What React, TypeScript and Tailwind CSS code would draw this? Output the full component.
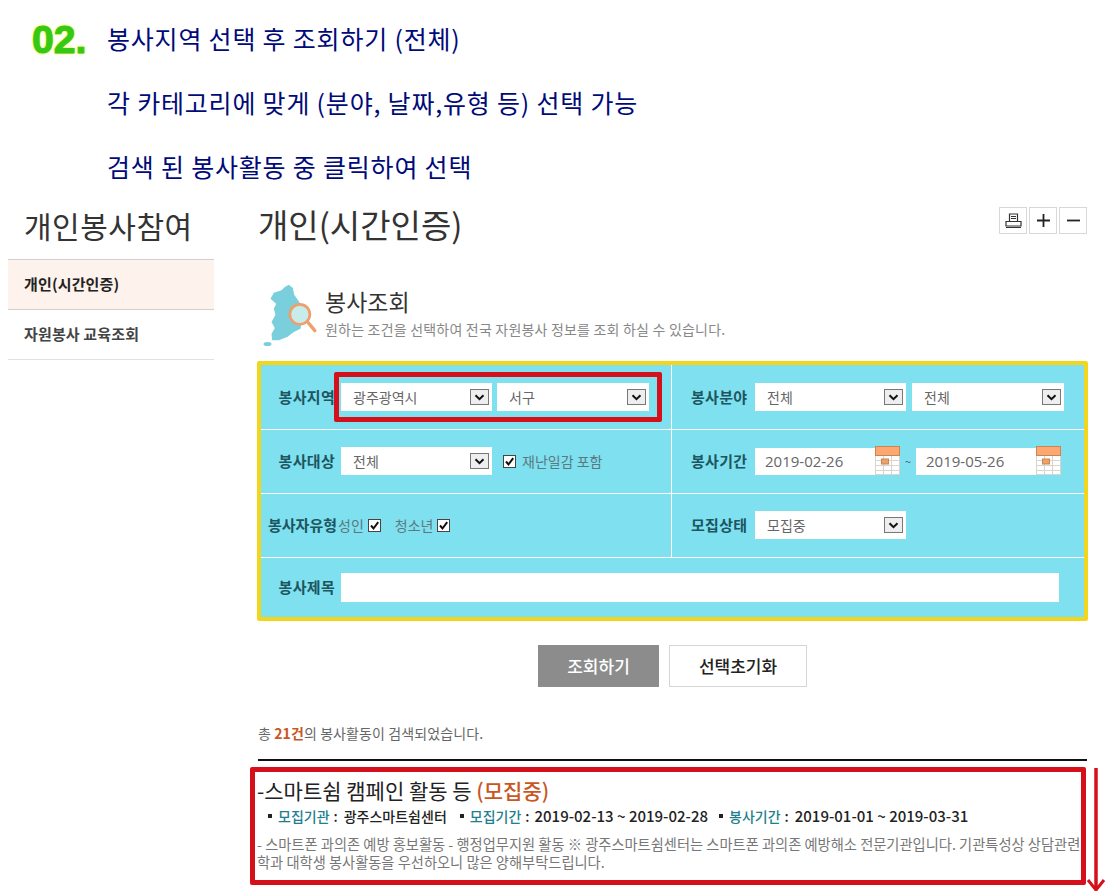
import React from "react";

const Chevron = () => (
  <span className="flex h-[16px] w-[19px] items-center justify-center border border-[#777] bg-[#eeeeee]">
    <svg width="11" height="7" viewBox="0 0 11 7"><path d="M1.5 1.2 L5.5 5.2 L9.5 1.2" fill="none" stroke="#111" strokeWidth="2" /></svg>
  </span>
);

const Select = ({ value, w }: { value: string; w: string }) => (
  <div className={`flex h-[28px] items-center justify-between bg-white pl-[12px] pr-[3px] text-[14px] text-[#666] ${w}`}>
    <span>{value}</span>
    <Chevron />
  </div>
);

const Check = () => (
  <span className="flex h-[13px] w-[13px] shrink-0 items-center justify-center border border-[#444] bg-white">
    <svg width="11" height="11" viewBox="0 0 11 11"><path d="M2 5.5 L4.5 8.5 L9.2 2.2" fill="none" stroke="#111" strokeWidth="2" /></svg>
  </span>
);

const Calendar = () => (
  <svg width="25" height="29" viewBox="0 0 25 29" className="-mt-[2px] shrink-0">
    <rect x="0" y="9" width="25" height="20" fill="#fff" />
    <path d="M0.5 9V29M8.5 9V29M16.5 9V29M24.5 9V29M0 14.5H25M0 19.5H25M0 24.5H25M0 28.5H25" stroke="#d9d5cc" strokeWidth="1" />
    <rect x="0.5" y="0.5" width="24" height="9" fill="#fda870" stroke="#c98552" />
    <rect x="6.5" y="13" width="7" height="5" fill="#f0a264" stroke="#c98552" />
  </svg>
);

const DateBox = ({ value }: { value: string }) => (
  <div className="flex h-[27px] w-[145px] items-center justify-between bg-white pl-[10px] text-[15px] text-[#666]">
    <span className="font-['Open_Sans',sans-serif]">{value}</span>
    <Calendar />
  </div>
);

const Label = ({ children }: { children: React.ReactNode }) => (
  <span className="w-[74px] shrink-0 text-right text-[15px] font-bold tracking-[0.3px] whitespace-nowrap text-[#1d5560]">{children}</span>
);

const RightLabel = ({ children }: { children: React.ReactNode }) => (
  <span className="w-[58px] shrink-0 text-left text-[15px] font-bold tracking-[0.3px] whitespace-nowrap text-[#1d5560]">{children}</span>
);

const ToolBtn = ({ children }: { children: React.ReactNode }) => (
  <span className="flex h-[27px] w-[28px] items-center justify-center border border-[#d8d8d8] bg-white">{children}</span>
);

const Intro = ({ children }: { children: React.ReactNode }) => (
  <p className="flex h-[64px] items-center pl-[107px] text-[25px] tracking-[0.8px] text-[#000a78]">{children}</p>
);

const Bullet = ({ first }: { first?: boolean }) => (
  <span className={`h-[4px] w-[4px] bg-[#222] ${first ? "" : "ml-[11px]"}`} />
);

const Key = ({ children }: { children: React.ReactNode }) => (
  <span className="ml-[6px] text-[#1f7f8e]">{children}</span>
);

const Colon = () => <span className="mx-[4px]">:</span>;

export default function App() {
  return (
    <div className="relative h-[891px] w-[1111px] overflow-hidden bg-white font-['Noto_Sans_CJK_KR','Noto_Sans',sans-serif]">
      <header className="relative pt-[7px]">
        <span className="absolute top-[11px] left-[32px] font-['Liberation_Sans',sans-serif] text-[39px] font-bold text-[#35c916] [-webkit-text-stroke:1px_#35c916] [text-shadow:0_0_3px_#eef23a,0_0_2px_#eef23a,0_0_2px_#eef23a,0_0_1px_#eef23a]">
          02.
        </span>
        <Intro>봉사지역 선택 후 조회하기 (전체)</Intro>
        <Intro>각 카테고리에 맞게 (분야, 날짜,유형 등) 선택 가능</Intro>
        <Intro>검색 된 봉사활동 중 클릭하여 선택</Intro>
      </header>

      <div className="flex">
        <aside className="ml-[8px] w-[206px] shrink-0">
          <h2 className="flex h-[52px] items-center pl-[16px] text-[30px] tracking-[0.5px] whitespace-nowrap text-[#333]">개인봉사참여</h2>
          <ul className="mt-[8px] text-[15px] font-bold tracking-[0.15px]">
            <li className="flex h-[51px] items-center border-y border-[#d5d0cc] bg-[#fdf3ec] pl-[16px] text-[#222]">개인(시간인증)</li>
            <li className="flex h-[50px] items-center border-b border-[#e2e2e2] pl-[16px] text-[#444]">자원봉사 교육조회</li>
          </ul>
        </aside>

        <main className="ml-[43px] w-[831px] shrink-0">
          <div className="flex h-[52px] items-center justify-between">
            <h1 className="pl-[1px] text-[33px] text-[#333]">개인(시간인증)</h1>
            <div className="-mt-[9px] mr-[1px] flex gap-[2px]">
              <ToolBtn>
                <svg width="17" height="16" viewBox="0 0 17 16"><path d="M4.5 8V1H12.5V8M6 3.5H11M6 5.5H11M1 8.5H16V13H1ZM1 14.5H16" fill="none" stroke="#333" strokeWidth="1.2" /></svg>
              </ToolBtn>
              <ToolBtn>
                <svg width="15" height="15" viewBox="0 0 15 15"><path d="M7.5 1V14M1 7.5H14" stroke="#222" strokeWidth="1.8" /></svg>
              </ToolBtn>
              <ToolBtn>
                <svg width="15" height="15" viewBox="0 0 15 15"><path d="M1 7.5H14" stroke="#222" strokeWidth="1.8" /></svg>
              </ToolBtn>
            </div>
          </div>

          <section className="mt-[32px] flex h-[64px]">
            <svg width="57" height="65" viewBox="20 20 170 195" className="-mt-[1px] ml-[5px] shrink-0">
              <path d="M100 28 L112 38 L116 58 L130 78 L138 92 L140 130 L135 160 L115 170 L95 185 L70 195 L50 195 L48 175 L58 158 L48 140 L60 118 L55 100 L62 85 L45 70 L55 52 L78 45 L88 35 Z" fill="#79cfdc" />
              <ellipse cx="36" cy="206" rx="12" ry="6" fill="#79cfdc" />
              <path d="M158 142 L180 168" stroke="#fff" strokeWidth="15" strokeLinecap="round" />
              <circle cx="133" cy="117" r="30" fill="#c7ecea" stroke="#ee9f6e" strokeWidth="8" />
              <path d="M158 142 L178 166" stroke="#ee9f6e" strokeWidth="10" strokeLinecap="round" />
            </svg>
            <div className="ml-[6px]">
              <h3 className="text-[23px] leading-[36px] text-[#333]">봉사조회</h3>
              <p className="text-[14px] leading-[20px] tracking-[0.2px] whitespace-nowrap text-[#888]">원하는 조건을 선택하여 전국 자원봉사 정보를 조회 하실 수 있습니다.</p>
            </div>
          </section>

          <section className="mt-[14px] h-[260px] rounded-[2px] border-[4px] border-[#f2d61e] bg-[#7fe0ef]">
            <div className="grid h-full grid-cols-[411px_1fr] grid-rows-[65px_64px_64px_1fr]">
              <div className="relative flex items-center gap-[5px] border-r border-b border-white">
                <div className="flex items-center gap-[6px]">
                  <Label>봉사지역</Label>
                  <Select value="광주광역시" w="w-[151px]" />
                </div>
                <Select value="서구" w="w-[152px]" />
                <div className="absolute top-[7px] left-[73px] h-[50px] w-[328px] rounded-[2px] border-[5px] border-[#d5101a]" />
              </div>
              <div className="flex items-center gap-[6px] border-b border-white pl-[19px]">
                <RightLabel>봉사분야</RightLabel>
                <Select value="전체" w="w-[151px]" />
                <Select value="전체" w="w-[152px]" />
              </div>

              <div className="flex items-center gap-[6px] border-r border-b border-white pb-[1px]">
                <Label>봉사대상</Label>
                <Select value="전체" w="w-[151px]" />
                <span className="ml-[5px]"><Check /></span>
                <span className="text-[14px] text-[#5a7a80]">재난일감 포함</span>
              </div>
              <div className="flex items-center gap-[6px] border-b border-white pl-[19px]">
                <RightLabel>봉사기간</RightLabel>
                <DateBox value="2019-02-26" />
                <span className="-mx-[1px] w-[6px] text-[11px] text-[#557]">~</span>
                <DateBox value="2019-05-26" />
              </div>

              <div className="flex items-center border-r border-b border-white pl-[7px]">
                <span className="text-[15px] font-bold text-[#1d5560]">봉사자유형</span>
                <span className="ml-[1px] text-[14px] text-[#5a7a80]">성인</span>
                <span className="ml-[4px]"><Check /></span>
                <span className="ml-[14px] text-[14px] text-[#5a7a80]">청소년</span>
                <span className="ml-[4px]"><Check /></span>
              </div>
              <div className="flex items-center gap-[6px] border-b border-white pb-[1px] pl-[19px]">
                <RightLabel>모집상태</RightLabel>
                <Select value="모집중" w="w-[151px]" />
              </div>

              <div className="col-span-2 flex items-center gap-[6px]">
                <Label>봉사제목</Label>
                <div className="h-[29px] w-[718px] bg-white" />
              </div>
            </div>
          </section>

          <div className="mt-[24px] flex justify-center gap-[10px]">
            <button className="h-[42px] w-[121px] bg-[#8c8c8c] text-[17px] font-medium text-white">조회하기</button>
            <button className="h-[42px] w-[138px] border border-[#d5d5d5] bg-white text-[17px] font-medium text-[#222]">선택초기화</button>
          </div>

          <p className="mt-[37px] pl-[1px] text-[14px] leading-[18px] tracking-[0.1px] text-[#666]">
            총 <b className="text-[#c8571f]">21건</b>의 봉사활동이 검색되었습니다.
          </p>

          <div className="mt-[17px] ml-[1px] h-[2px] w-[829px] bg-[#111]" />

          <article className="relative -ml-[7px] mt-[6px] h-[118px] w-[836px] rounded-[2px] border-[5px] border-[#d5101a] pl-[2px]">
            <h4 className="pt-[4px] text-[21px] leading-[28px] whitespace-nowrap text-[#222]">
              -스마트쉼 캠페인 활동 등 <span className="font-medium text-[#c8571f]">(모집중)</span>
            </h4>
            <div className="flex items-center pl-[11px] text-[14px] leading-[24px] font-medium whitespace-nowrap text-[#222]">
              <Bullet first />
              <Key>모집기관</Key>
              <Colon />
              <span className="mr-[2px] ml-[2px]">광주스마트쉼센터</span>
              <Bullet />
              <Key>모집기간</Key>
              <Colon />
              <span className="ml-[1px] text-[15px]">2019-02-13 ~ 2019-02-28</span>
              <Bullet />
              <Key>봉사기간</Key>
              <Colon />
              <span className="ml-[2px] text-[15px]">2019-01-01 ~ 2019-03-31</span>
            </div>
            <p className="mt-[7px] text-[14.25px] leading-[18px] whitespace-nowrap text-[#777]">
              - 스마트폰 과의존 예방 홍보활동 - 행정업무지원 활동 ※ 광주스마트쉼센터는 스마트폰 과의존 예방해소 전문기관입니다. 기관특성상 상담관련
              <br />
              학과 대학생 봉사활동을 우선하오니 많은 양해부탁드립니다.
            </p>
          </article>
        </main>
      </div>

      <svg width="20" height="124" viewBox="0 0 20 124" className="absolute top-[767px] left-[1086px]">
        <path d="M10 1 V122" stroke="#d5101a" strokeWidth="3.5" />
        <path d="M2 113 L10 123 L18 113" fill="none" stroke="#d5101a" strokeWidth="3" />
      </svg>
    </div>
  );
}
